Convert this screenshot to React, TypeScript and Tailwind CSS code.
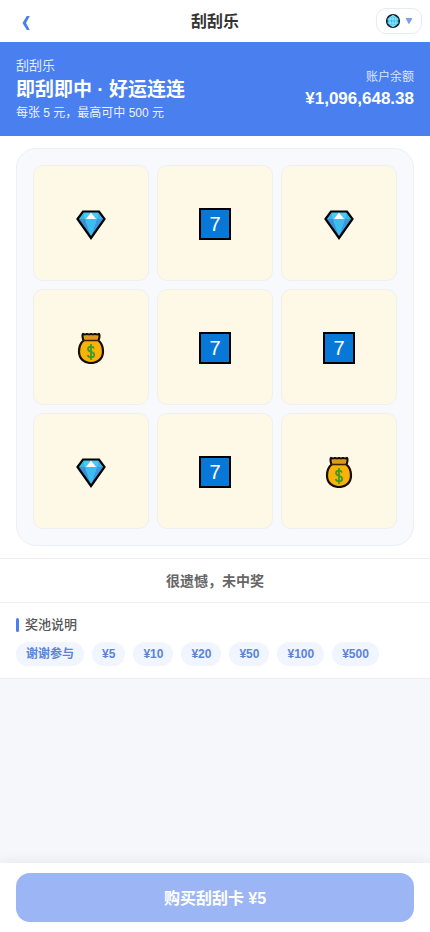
import React from "react";

type CellSymbol = "diamond" | "seven" | "bag";

const cells: CellSymbol[] = [
  "diamond",
  "seven",
  "diamond",
  "bag",
  "seven",
  "seven",
  "diamond",
  "seven",
  "bag",
];

const prizes = ["谢谢参与", "¥5", "¥10", "¥20", "¥50", "¥100", "¥500"];

const Diamond = () => (
  <svg viewBox="0 0 32 32" className="h-8 w-8" role="img" aria-label="diamond">
    <path d="M8 3h16l6 8-14 19L2 11z" fill="#36b7ee" />
    <path d="M3 11h7l6 18z" fill="#3d8fd8" />
    <path d="M29 11h-7l-6 18z" fill="#3a98e0" />
    <path d="M8 4l2 7h12l2-7z" fill="#4cc8f5" />
    <path d="M16 4.500l-5 6.500h10z" fill="#fff" />
    <path d="M10 11h12l-6 18z" fill="#3cbdf2" />
    <path d="M8 3.500h16l5.500 7.500L16 30 2.500 11z" fill="none" stroke="#000" strokeWidth="2.200" strokeLinejoin="miter" />
  </svg>
);

const MoneyBag = () => (
  <svg viewBox="0 0 32 32" className="h-8 w-8" role="img" aria-label="money bag">
    <path
      d="M8 2c1.300.8 2.700.8 4 0 1.300.8 2.700.8 4 0 1.300.8 2.700.8 4 0 1.300.8 2.700.8 4 0 1 1 1 2-.5 6.500C26.500 11 28 15 28 19.500 28 26.500 23 31 16 31S4 26.500 4 19.500C4 15 5.500 11 8.500 8.500 7 4 7 3 8 2z"
      fill="#f9b208"
      stroke="#160c00"
      strokeWidth="2.200"
      strokeLinejoin="round"
    />
    <path d="M9 3.500h14l-.8 4H9.800z" fill="#dc9a1c" />
    <path d="M8.500 8.500h15" stroke="#3a2200" strokeWidth="1.600" />
    <path
      d="M19 16.500c-.5-1.300-1.600-1.900-3-1.900-1.900 0-3 1-3 2.500 0 3.700 6.200 2 6.200 5.600 0 1.600-1.300 2.600-3.200 2.600s-2.900-.9-3.300-2.300M16 12v16"
      fill="none"
      stroke="#3c9c28"
      strokeWidth="1.800"
    />
  </svg>
);

const Seven = () => (
  <span className="flex h-8 w-8 items-center justify-center border-2 border-black bg-[#0878d8] text-xl leading-none text-white">
    7
  </span>
);

const Globe = () => (
  <svg viewBox="0 0 16 16" className="h-4 w-4" fill="none" aria-hidden="true">
    <circle cx="8" cy="8" r="6.300" fill="#35bde6" stroke="#0a1f2b" strokeWidth="1.600" />
    <path d="M2.500 6h11M2.500 10h11M8 2.500v11" stroke="#b8ecfb" strokeWidth=".8" />
    <ellipse cx="8" cy="8" rx="3" ry="5.500" stroke="#b8ecfb" strokeWidth=".8" />
  </svg>
);

const symbols: Record<CellSymbol, React.ReactNode> = {
  diamond: <Diamond />,
  seven: <Seven />,
  bag: <MoneyBag />,
};

const App = () => {
  return (
    <div className="flex min-h-screen flex-col bg-[#f5f7fb] font-['Liberation_Sans','Noto_Sans_CJK_SC',sans-serif] text-[#333]">
      <header className="grid h-[42px] grid-cols-[1fr_auto_1fr] items-center bg-white px-2">
        <button type="button" aria-label="返回" className="flex h-8 w-9 items-center justify-center pt-1 text-[#4a7fef]">
          <svg viewBox="0 0 8 14" className="h-3.5 w-2" aria-hidden="true">
            <path d="M4.800 0h3L4 7l3.800 7h-3L.5 7z" fill="currentColor" />
          </svg>
        </button>
        <h1 className="pt-0.5 text-base font-bold">刮刮乐</h1>
        <button
          type="button"
          aria-label="语言"
          className="flex h-[26px] w-[46px] items-center justify-center gap-1 justify-self-end rounded-[10px] border border-[#e6ebf5] bg-white"
        >
          <Globe />
          <svg viewBox="0 0 8 8" className="h-2 w-2" aria-hidden="true">
            <path d="M.5 1h7L4 7.500z" fill="#7d9fe8" />
          </svg>
        </button>
      </header>

      <section className="flex items-center justify-between bg-[#4a7fef] px-4 py-3 text-white">
        <div>
          <p className="text-[13px] leading-6 opacity-85">刮刮乐</p>
          <h2 className="text-[19px] leading-6 font-bold">即刮即中 · 好运连连</h2>
          <p className="text-xs leading-[22px] opacity-90">每张 5 元，最高可中 500 元</p>
        </div>
        <div className="text-right">
          <p className="text-xs leading-5 opacity-80">账户余额</p>
          <p className="text-[17px] leading-6 font-bold">¥1,096,648.38</p>
        </div>
      </section>

      <section className="bg-white px-4 py-3">
        <div className="grid grid-cols-3 gap-2 rounded-[20px] border border-[#eceff5] bg-[#f7f9fc] p-4">
          {cells.map((cell, i) => (
            <div
              key={i}
              className="flex aspect-square items-center justify-center rounded-[10px] border border-[#f0f0ee] bg-[#fef8e6] pt-0.5"
            >
              {symbols[cell]}
            </div>
          ))}
        </div>
      </section>

      <p className="border-y border-[#eceef1] bg-white pt-[13px] pb-[11px] text-center text-sm leading-[19px] font-bold text-[#666]">
        很遗憾，未中奖
      </p>

      <section className="border-b border-[#eceef1] bg-white px-4 py-3">
        <h3 className="flex items-center gap-1.5 text-[13px] leading-[19px] font-medium text-[#555]">
          <span className="h-3.5 w-[3px] rounded-xs bg-[#4a7fef]" />
          奖池说明
        </h3>
        <ul className="mt-2 flex flex-wrap gap-2">
          {prizes.map((prize) => (
            <li key={prize} className="rounded-full bg-[#f0f5ff] px-2.5 text-xs leading-6 font-bold text-[#5a84d8]">
              {prize}
            </li>
          ))}
        </ul>
      </section>

      <footer className="sticky bottom-0 mt-auto bg-white px-4 py-2.5 shadow-[0_-2px_12px_rgba(0,0,0,0.06)]">
        <button
          type="button"
          disabled
          className="h-[49px] w-full rounded-[14px] bg-[#9cb6f5] pt-0.5 text-base font-bold text-white"
        >
          购买刮刮卡 ¥5
        </button>
      </footer>
    </div>
  );
};

export default App;
